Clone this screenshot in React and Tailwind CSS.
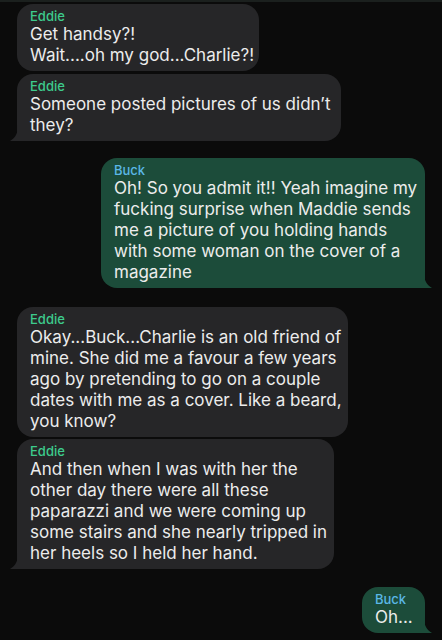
const messages = [
  { from: "Eddie", lines: ["Get handsy?!", "Wait....oh my god...Charlie?!"], tail: false, gap: "mt-0", w: "w-[242px]" },
  { from: "Eddie", lines: ["Someone posted pictures of us didn’t", "they?"], tail: true, gap: "mt-[3px]", w: "w-[324px]" },
  {
    from: "Buck",
    lines: [
      "Oh! So you admit it!! Yeah imagine my",
      "fucking surprise when Maddie sends",
      "me a picture of you holding hands",
      "with some woman on the cover of a",
      "magazine",
    ],
    tail: true,
    gap: "mt-[17px]",
    w: "w-[324px]",
  },
  {
    from: "Eddie",
    lines: [
      "Okay...Buck...Charlie is an old friend of",
      "mine. She did me a favour a few years",
      "ago by pretending to go on a couple",
      "dates with me as a cover. Like a beard,",
      "you know?",
    ],
    tail: false,
    gap: "mt-[19px]",
    w: "w-[331px]",
  },
  {
    from: "Eddie",
    lines: [
      "And then when I was with her the",
      "other day there were all these",
      "paparazzi and we were coming up",
      "some stairs and she nearly tripped in",
      "her heels so I held her hand.",
    ],
    tail: true,
    gap: "mt-[2px]",
    w: "w-[317px]",
  },
  { from: "Buck", lines: ["Oh..."], tail: true, gap: "mt-[18px]", w: "w-[63px]" },
];

function Tail({ mine }) {
  if (mine) {
    return (
      <svg
        className="absolute bottom-0 right-[-7px]"
        width="22"
        height="16"
        viewBox="0 0 22 16"
      >
        <path d="M14 0 C14 9 17 13 22 16 L0 16 L0 0 Z" fill="#1c4c3a" />
      </svg>
    );
  }
  return (
    <svg
      className="absolute bottom-0 left-[-7px]"
      width="22"
      height="16"
      viewBox="0 0 22 16"
    >
      <path d="M8 0 C8 9 5 13 0 16 L22 16 L22 0 Z" fill="#262628" />
    </svg>
  );
}

function Bubble({ msg }) {
  const mine = msg.from === "Buck";
  return (
    <div className={`flex ${mine ? "justify-end pr-[17px]" : "justify-start pl-[17px]"} ${msg.gap}`}>
      <div
        className={`relative ${msg.w} rounded-[16px] pl-[13px] pr-[10px] pt-[4px] pb-[5px] ${
          mine ? "bg-[#1c4c3a]" : "bg-[#262628]"
        } ${msg.tail ? (mine ? "rounded-br-[6px]" : "rounded-bl-[6px]") : ""}`}
      >
        {msg.tail && <Tail mine={mine} />}
        <div className="relative">
          <div
            className={`text-[13px] leading-[16px] font-medium ${
              mine ? "text-[#5ab7e6]" : "text-[#3dcb8c]"
            }`}
          >
            {msg.from}
          </div>
          {msg.lines.map((l, i) => (
            <div key={i} className="whitespace-nowrap text-[17px] leading-[21px] text-[#ececec]">
              {l}
            </div>
          ))}
        </div>
      </div>
    </div>
  );
}

export default function App() {
  return (
    <div
      className="w-[442px] h-[640px] overflow-hidden bg-[#0b0b0b]"
      style={{ fontFamily: "Inter, 'Noto Sans', sans-serif" }}
    >
      <div className="h-[2px] bg-[#1b201e]" />
      <div className="pt-[2px]">
        {messages.map((m, i) => (
          <Bubble key={i} msg={m} />
        ))}
      </div>
    </div>
  );
}
